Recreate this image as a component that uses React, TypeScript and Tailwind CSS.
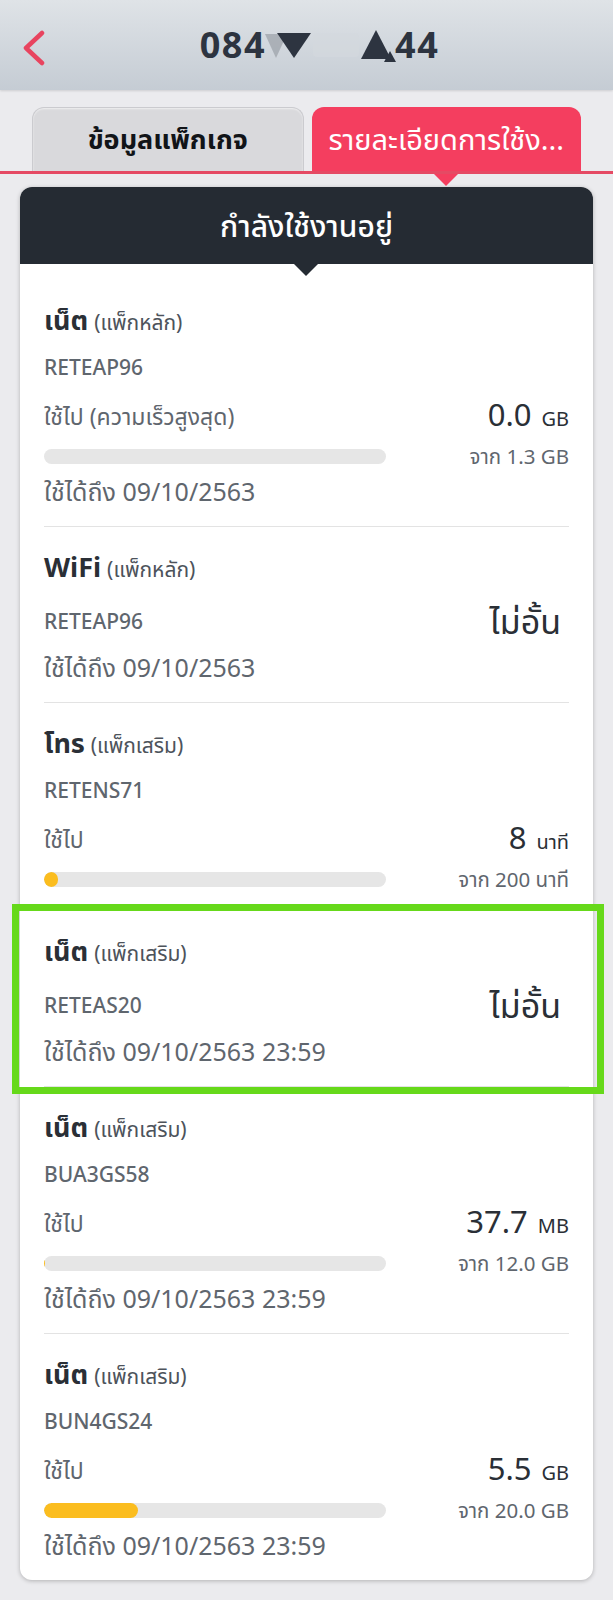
import React from 'react';

type Item = {
  name: string;
  pack: string;
  code: string;
  used?: string;
  value?: string;
  unit?: string;
  total?: string;
  pct?: number;
  unlimited?: boolean;
  expiry?: string;
  first?: boolean;
  highlight?: boolean;
  last?: boolean;
};

const ITEMS: Item[] = [
  { name: 'เน็ต', pack: '(แพ็กหลัก)', code: 'RETEAP96', used: 'ใช้ไป (ความเร็วสูงสุด)', value: '0.0', unit: 'GB', total: 'จาก 1.3 GB', pct: 0, expiry: 'ใช้ได้ถึง 09/10/2563', first: true },
  { name: 'WiFi', pack: '(แพ็กหลัก)', code: 'RETEAP96', unlimited: true, expiry: 'ใช้ได้ถึง 09/10/2563' },
  { name: 'โทร', pack: '(แพ็กเสริม)', code: 'RETENS71', used: 'ใช้ไป', value: '8', unit: 'นาที', total: 'จาก 200 นาที', pct: 4 },
  { name: 'เน็ต', pack: '(แพ็กเสริม)', code: 'RETEAS20', unlimited: true, expiry: 'ใช้ได้ถึง 09/10/2563 23:59', highlight: true },
  { name: 'เน็ต', pack: '(แพ็กเสริม)', code: 'BUA3GS58', used: 'ใช้ไป', value: '37.7', unit: 'MB', total: 'จาก 12.0 GB', pct: 0.3, expiry: 'ใช้ได้ถึง 09/10/2563 23:59' },
  { name: 'เน็ต', pack: '(แพ็กเสริม)', code: 'BUN4GS24', used: 'ใช้ไป', value: '5.5', unit: 'GB', total: 'จาก 20.0 GB', pct: 27.5, expiry: 'ใช้ได้ถึง 09/10/2563 23:59', last: true },
];

function UsageBar({ pct }: { pct: number }) {
  return (
    <div className="w-[342px] h-[15px] rounded-full bg-[#e6e6e6] overflow-hidden">
      {pct > 0 && (
        <div className="h-full rounded-full bg-[#fbbd1f]" style={{ width: pct < 1 ? '1px' : `max(${pct}%, 14px)` }} />
      )}
    </div>
  );
}

function PackageRow({ item }: { item: Item }) {
  return (
    <div className="relative px-6">
      {item.highlight && (
        <div className="absolute -left-[8px] -right-[11px] -top-[7px] -bottom-[7px] border-[7px] border-[#66d91a] pointer-events-none" />
      )}
      <div className={`${item.first ? 'pt-[40px]' : 'pt-6'} ${item.last ? '' : 'border-b border-[#e3e3e3]'} ${item.expiry ? 'pb-[21px]' : 'pb-[19px]'}`}>
        <div className="h-8 flex items-baseline gap-[6px] leading-8">
          <span className="text-[27px] font-bold text-[#2a2f36]">{item.name}</span>
          <span className="text-[21px] text-[#4d535b]">{item.pack}</span>
        </div>

        {item.unlimited ? (
          <>
            <div className="mt-[26px] h-6 flex items-center justify-between">
              <span className="text-[21px] font-medium text-[#5f666e] leading-6">{item.code}</span>
              <span className="text-[34px] text-[#2a2f36] leading-6 mr-[8px]">ไม่อั้น</span>
            </div>
            <div className="mt-5 h-7 leading-7 text-[25px] text-[#5f666e]">{item.expiry}</div>
          </>
        ) : (
          <>
            <div className="mt-[19px] h-6 leading-6 text-[21px] font-medium text-[#5f666e]">{item.code}</div>
            <div className="mt-[21px] h-8 flex items-center justify-between">
              <span className="text-[23px] text-[#5f666e] leading-8">{item.used}</span>
              <span className="flex items-baseline gap-[10px] leading-8">
                <span className="text-[31px] text-[#2a2f36]">{item.value}</span>
                <span className="text-[20px] text-[#2a2f36]">{item.unit}</span>
              </span>
            </div>
            <div className="mt-3 h-6 flex items-center justify-between">
              <UsageBar pct={item.pct ?? 0} />
              <span className="text-[20.5px] text-[#5f666e] leading-6">{item.total}</span>
            </div>
            {item.expiry && <div className="mt-[9px] h-7 leading-7 text-[25px] text-[#5f666e]">{item.expiry}</div>}
          </>
        )}
      </div>
    </div>
  );
}

export default function App() {
  return (
    <div className="min-h-screen bg-[#ebebee] pb-6" style={{ fontFamily: '"Noto Sans", "Noto Sans Thai", Roboto, sans-serif' }}>
      {/* top bar */}
      <header className="relative h-[90px] bg-gradient-to-b from-[#dfe3e7] to-[#c5ccd4] flex items-center justify-center shadow-[0_1px_2px_rgba(0,0,0,0.12)]">
        <svg className="absolute left-[21px] top-[30px]" width="26" height="36" viewBox="0 0 26 36" fill="none">
          <path d="M21 3 L5 18 L21 33" stroke="#e8445f" strokeWidth="4.5" strokeLinecap="round" strokeLinejoin="round" />
        </svg>
        <div className="flex items-center text-[36px] font-bold text-[#2d3440] tracking-[1.5px] ml-[26px]">
          <span>084</span>
          <svg width="50" height="30" viewBox="0 0 50 30" className="-ml-[3px]">
            <polygon points="2,4 24,4 13,28" fill="#9aa0a6" opacity="0.7" />
            <polygon points="14,3 48,3 31,28" fill="#2d3440" />
          </svg>
          <span className="w-[46px] h-[24px] bg-[#d3d8de] rounded-sm opacity-60" />
          <svg width="40" height="36" viewBox="0 0 40 36">
            <polygon points="17,3 2,32 32,32" fill="#2d3440" />
            <polygon points="31,24 25,35 37,35" fill="#2d3440" />
          </svg>
          <span className="-ml-[4px]">44</span>
        </div>
      </header>

      {/* tabs */}
      <div className="mt-[17px] px-8 flex gap-2 border-b-[3px] border-[#e54a64]">
        <div className="flex-1 h-[64px] rounded-t-xl bg-[#d9d9dc] border border-b-0 border-[#cbcbcf] shadow-[inset_0_1px_2px_rgba(255,255,255,0.6)] flex items-center justify-center">
          <span className="text-[27px] font-bold text-[#111418]">ข้อมูลแพ็กเกจ</span>
        </div>
        <div className="relative flex-1 h-[64px] rounded-t-xl bg-[#f43e5f] flex items-center justify-center">
          <span className="text-[29px] text-white whitespace-nowrap">รายละเอียดการใช้ง...</span>
          <div className="absolute left-1/2 -translate-x-1/2 top-full mt-[3px] w-0 h-0 border-l-[12px] border-r-[12px] border-t-[12px] border-l-transparent border-r-transparent border-t-[#f43e5f]" />
        </div>
      </div>

      {/* card */}
      <div className="mx-5 mt-[13px] rounded-xl bg-white shadow-[0_1px_4px_rgba(0,0,0,0.25)]">
        <div className="relative h-[77px] rounded-t-xl bg-[#252b33] flex items-center justify-center">
          <span className="text-[30px] font-medium text-white">กำลังใช้งานอยู่</span>
          <div className="absolute left-[274px] top-full w-0 h-0 border-l-[12px] border-r-[12px] border-t-[12px] border-l-transparent border-r-transparent border-t-[#252b33]" />
        </div>
        {ITEMS.map((item, i) => (
          <PackageRow key={i} item={item} />
        ))}
      </div>
    </div>
  );
}
